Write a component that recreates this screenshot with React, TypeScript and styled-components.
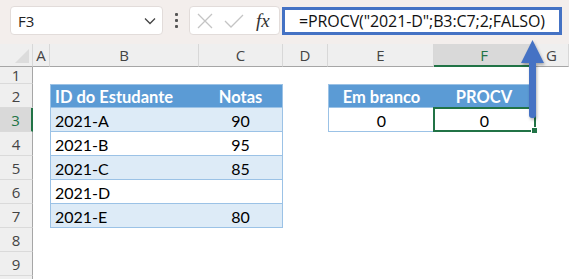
import React from 'react';
import styled, { createGlobalStyle, css } from 'styled-components';

const GlobalStyle = createGlobalStyle`
  html, body {
    margin: 0;
    padding: 0;
    background: #ffffff;
    overflow: hidden;
  }
  * {
    box-sizing: border-box;
  }
`;

type Kind = 'head' | 'band' | 'plain' | 'none';

type CellData = {
  text?: string;
  kind: Kind;
  align?: 'left' | 'center';
  first?: boolean;
  last?: boolean;
  top?: boolean;
  selected?: boolean;
};

const COLS = ['A', 'B', 'C', 'D', 'E', 'F', 'G'];

const blank: CellData = { kind: 'none' };
const emptyRow = [blank, blank, blank, blank, blank, blank, blank];

// conteúdo das linhas 1..9, colunas A..G
const rows: CellData[][] = [
  emptyRow,
  [
    blank,
    { text: 'ID do Estudante', kind: 'head', first: true, top: true },
    { text: 'Notas', kind: 'head', align: 'center', last: true, top: true },
    blank,
    { text: 'Em branco', kind: 'head', align: 'center', first: true, top: true },
    { text: 'PROCV', kind: 'head', align: 'center', last: true, top: true },
    blank,
  ],
  [
    blank,
    { text: '2021-A', kind: 'band', first: true },
    { text: '90', kind: 'band', align: 'center', last: true },
    blank,
    { text: '0', kind: 'plain', align: 'center', first: true },
    { text: '0', kind: 'plain', align: 'center', last: true, selected: true },
    blank,
  ],
  [
    blank,
    { text: '2021-B', kind: 'plain', first: true },
    { text: '95', kind: 'plain', align: 'center', last: true },
    blank, blank, blank, blank,
  ],
  [
    blank,
    { text: '2021-C', kind: 'band', first: true },
    { text: '85', kind: 'band', align: 'center', last: true },
    blank, blank, blank, blank,
  ],
  [
    blank,
    { text: '2021-D', kind: 'plain', first: true },
    { text: '', kind: 'plain', align: 'center', last: true },
    blank, blank, blank, blank,
  ],
  [
    blank,
    { text: '2021-E', kind: 'band', first: true },
    { text: '80', kind: 'band', align: 'center', last: true },
    blank, blank, blank, blank,
  ],
  emptyRow,
  emptyRow,
];

const App: React.FC = () => {
  return (
    <Page>
      <GlobalStyle />
      <TopBar>
        <NameBox>
          <NameText>F3</NameText>
          <svg width="12" height="8" viewBox="0 0 12 8">
            <path d="M1 1.5 L6 6.5 L11 1.5" fill="none" stroke="#444" strokeWidth="1.3" />
          </svg>
        </NameBox>
        <Dots>
          <span />
          <span />
          <span />
        </Dots>
        <FxBox>
          <svg width="16" height="16" viewBox="0 0 16 16">
            <path d="M1 1 L15 15 M15 1 L1 15" stroke="#c4c4c4" strokeWidth="1.3" />
          </svg>
          <svg width="20" height="16" viewBox="0 0 20 16">
            <path d="M1 8 L7 14 L19 2" fill="none" stroke="#c4c4c4" strokeWidth="1.3" />
          </svg>
          <FxLabel>fx</FxLabel>
        </FxBox>
        <FormulaBox>=PROCV("2021-D";B3:C7;2;FALSO)</FormulaBox>
      </TopBar>

      <Sheet>
        <Corner />
        {COLS.map((c) => (
          <ColHead key={c} $active={c === 'F'}>{c}</ColHead>
        ))}
        {rows.map((row, i) => (
          <React.Fragment key={i}>
            <RowHead $active={i === 2}>{i + 1}</RowHead>
            {row.map((cell, j) => (
              <Cell
                key={j}
                $kind={cell.kind}
                $align={cell.align || 'left'}
                $first={!!cell.first}
                $last={!!cell.last}
                $top={!!cell.top}
                $selected={!!cell.selected}
              >
                {cell.text}
              </Cell>
            ))}
          </React.Fragment>
        ))}
        <RowHead $active={false} />
      </Sheet>

      <Arrow width="32" height="86" viewBox="0 0 32 86">
        <defs>
          <filter id="sh" x="-50%" y="-20%" width="200%" height="140%">
            <feDropShadow dx="1" dy="2" stdDeviation="1.5" floodColor="#000" floodOpacity="0.3" />
          </filter>
        </defs>
        <g filter="url(#sh)">
          <rect x="12" y="20" width="7" height="60" rx="3" fill="#4472c4" />
          <path d="M15.5 2 L27 25 L4 25 Z" fill="#4472c4" />
        </g>
      </Arrow>
    </Page>
  );
};

export default App;

const Page = styled.div`
  position: relative;
  width: 569px;
  height: 279px;
  overflow: hidden;
  background: #ffffff;
  font-family: 'Lato', 'Liberation Sans', sans-serif;
`;

const TopBar = styled.div`
  display: flex;
  align-items: center;
  height: 44px;
  padding: 0 7px 3px 10px;
  background: #f3eeec;
`;

const NameBox = styled.div`
  display: flex;
  align-items: center;
  justify-content: space-between;
  width: 153px;
  height: 29px;
  padding: 0 6px 0 7px;
  background: #ffffff;
  border: 1px solid #e2dcda;
  border-radius: 4px;
`;

const NameText = styled.span`
  font-family: 'Open Sans', 'Liberation Sans', sans-serif;
  font-size: 15px;
  color: #222;
`;

const Dots = styled.div`
  display: flex;
  flex-direction: column;
  gap: 3px;
  margin: 0 11px 0 12px;

  span {
    width: 3px;
    height: 3px;
    background: #555;
    border-radius: 1px;
  }
`;

const FxBox = styled.div`
  display: flex;
  align-items: center;
  gap: 11px;
  width: 91px;
  height: 29px;
  padding: 0 5px 0 7px;
  background: #ffffff;
  border: 1px solid #e2dcda;
  border-radius: 4px;
`;

const FxLabel = styled.span`
  font-family: 'Liberation Serif', serif;
  font-style: italic;
  font-size: 19px;
  color: #333;
  margin-left: 1px;
`;

const FormulaBox = styled.div`
  display: flex;
  align-items: center;
  width: 280px;
  height: 28px;
  margin-left: 2px;
  padding-left: 14px;
  background: #ffffff;
  border: 3px solid #4472c4;
  font-family: 'Open Sans', 'Liberation Sans', sans-serif;
  font-size: 16px;
  letter-spacing: -0.1px;
  color: #111;
  white-space: nowrap;
`;

const Sheet = styled.div`
  display: grid;
  grid-template-columns: 33px 17px 149px 84px 45px 106px 101px 1fr;
  grid-template-rows: 23px 17px repeat(7, 24px) 24px;
  grid-auto-rows: 24px;
`;

const Corner = styled.div`
  position: relative;
  background: #efefef;
  border-right: 1px solid #d8d8d8;
  border-bottom: 1px solid #a6a6a6;

  &::after {
    content: '';
    position: absolute;
    right: 3px;
    bottom: 3px;
    border-style: solid;
    border-width: 0 0 14px 14px;
    border-color: transparent transparent #dcdcdc transparent;
  }
`;

const ColHead = styled.div<{ $active: boolean }>`
  display: flex;
  align-items: center;
  justify-content: center;
  background: ${(p) => (p.$active ? '#d9d9d9' : '#efefef')};
  border-right: 1px solid #d8d8d8;
  border-bottom: ${(p) => (p.$active ? '2px solid #217346' : '1px solid #a6a6a6')};
  font-family: 'Open Sans', 'Liberation Sans', sans-serif;
  font-size: 15px;
  color: ${(p) => (p.$active ? '#217346' : '#444')};
`;

const RowHead = styled.div<{ $active: boolean }>`
  display: flex;
  align-items: center;
  justify-content: center;
  background: ${(p) => (p.$active ? '#d9d9d9' : '#efefef')};
  border-bottom: 1px solid #dadada;
  border-right: ${(p) => (p.$active ? '2px solid #217346' : '1px solid #a6a6a6')};
  font-family: 'Open Sans', 'Liberation Sans', sans-serif;
  font-size: 15px;
  color: ${(p) => (p.$active ? '#217346' : '#444')};
`;

const tableBorder = '#9bc2e6';

const Cell = styled.div<{
  $kind: Kind;
  $align: 'left' | 'center';
  $first: boolean;
  $last: boolean;
  $top: boolean;
  $selected: boolean;
}>`
  position: relative;
  display: flex;
  align-items: center;
  justify-content: ${(p) => (p.$align === 'center' ? 'center' : 'flex-start')};
  padding: 1px 4px 0 4px;
  font-size: 16px;
  color: #000;
  white-space: nowrap;

  ${(p) =>
    p.$kind !== 'none' &&
    css`
      border-bottom: 1px solid ${tableBorder};
      ${p.$first && `border-left: 1px solid ${tableBorder};`}
      ${p.$last && `border-right: 1px solid ${tableBorder};`}
      ${p.$top && `border-top: 1px solid ${tableBorder};`}
    `}

  ${(p) =>
    p.$kind === 'head' &&
    css`
      background: #5b9bd5;
      color: #ffffff;
      font-weight: 700;
      font-size: 16.5px;
    `}

  ${(p) =>
    p.$kind === 'band' &&
    css`
      background: #ddebf7;
    `}

  ${(p) =>
    p.$selected &&
    css`
      border: 2px solid #217346;
      margin: -1px -1px 0 -1px;

      &::after {
        content: '';
        position: absolute;
        right: -4px;
        bottom: -4px;
        width: 5px;
        height: 5px;
        background: #217346;
        border: 1px solid #ffffff;
      }
    `}
`;

const Arrow = styled.svg`
  position: absolute;
  left: 517px;
  top: 38px;
`;
